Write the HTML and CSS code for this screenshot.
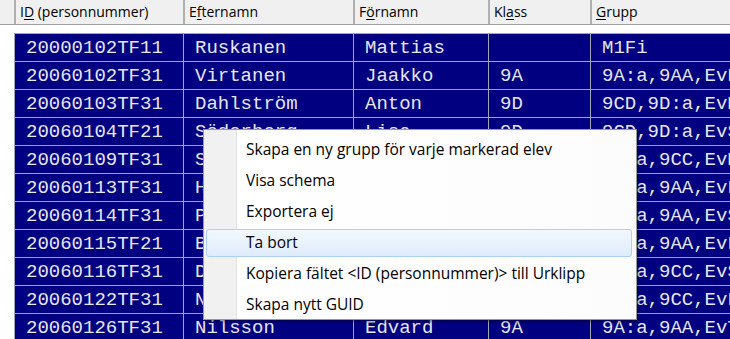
FILE: index.html
```html
<!doctype html>
<html lang="sv">
  <head>
    <meta charset="UTF-8" />
    <title>Elever</title>
    <link rel="stylesheet" href="styles.css">
  </head>
  <body>
    <div class="header">
      <div class="hcell hcell-first"></div>
      <div class="hcell c-id">I<u>D</u> (personnummer)</div>
      <div class="hcell c-last">E<u>f</u>ternamn</div>
      <div class="hcell c-first">F<u>ö</u>rnamn</div>
      <div class="hcell c-class">Kl<u>a</u>ss</div>
      <div class="hcell c-group"><u>G</u>rupp</div>
    </div>

    <table class="students">
      <colgroup>
        <col class="c-id" />
        <col class="c-last" />
        <col class="c-first" />
        <col class="c-class" />
        <col class="c-group" />
      </colgroup>
      <tbody>
        <tr><td>20000102TF11</td><td>Ruskanen</td><td>Mattias</td><td></td><td>M1Fi</td></tr>
        <tr><td>20060102TF31</td><td>Virtanen</td><td>Jaakko</td><td>9A</td><td>9A:a,9AA,EvE,SpT</td></tr>
        <tr><td>20060103TF31</td><td>Dahlström</td><td>Anton</td><td>9D</td><td>9CD,9D:a,EvM,SpF</td></tr>
        <tr><td>20060104TF21</td><td>Söderberg</td><td>Lisa</td><td>9D</td><td>9CD,9D:a,EvS,SpT</td></tr>
        <tr><td>20060109TF31</td><td>Svensson</td><td>Erik</td><td>9C</td><td>9C:a,9CC,EvM,SpF</td></tr>
        <tr><td>20060113TF31</td><td>Holm</td><td>Sara</td><td>9A</td><td>9A:a,9AA,EvF,SpT</td></tr>
        <tr><td>20060114TF31</td><td>Persson</td><td>Johan</td><td>9A</td><td>9A:a,9AA,EvS,SpF</td></tr>
        <tr><td>20060115TF21</td><td>Berg</td><td>Emma</td><td>9A</td><td>9A:a,9AA,EvF,SpT</td></tr>
        <tr><td>20060116TF31</td><td>Danielsson</td><td>Oskar</td><td>9C</td><td>9C:a,9CC,EvS,SpF</td></tr>
        <tr><td>20060122TF31</td><td>Nyberg</td><td>Elin</td><td>9C</td><td>9C:a,9CC,EvF,SpT</td></tr>
        <tr><td>20060126TF31</td><td>Nilsson</td><td>Edvard</td><td>9A</td><td>9A:a,9AA,EvT,SpF</td></tr>
      </tbody>
    </table>

    <ul class="context-menu">
      <li class="menu-item">Skapa en ny grupp för varje markerad elev</li>
      <li class="menu-item">Visa schema</li>
      <li class="menu-item">Exportera ej</li>
      <li class="menu-item active">Ta bort</li>
      <li class="menu-item">Kopiera fältet &lt;ID (personnummer)&gt; till Urklipp</li>
      <li class="menu-item">Skapa nytt GUID</li>
    </ul>
  </body>
</html>
```

FILE: styles.css
```css
body {
  margin: 0;
  background: #ffffff;
  overflow: hidden;
  width: 730px;
  height: 339px;
  position: relative;
}
.header {
  display: flex;
  height: 24px;
  background: #f0f0f0;
  border-bottom: 1px solid #a0a0a0;
  font-family: "Open Sans", "Noto Sans", sans-serif;
  font-size: 14px;
  color: #000000;
  white-space: nowrap;
}
.hcell {
  box-sizing: border-box;
  border-right: 2px solid #b0b0b0;
  padding-left: 4px;
  line-height: 24px;
  flex: none;
  overflow: hidden;
}
.hcell-first {
  width: 16px;
  padding: 0;
}
.hcell.c-id {
  width: 169px;
}
.hcell.c-last {
  width: 170px;
}
.hcell.c-first {
  width: 135px;
}
.hcell.c-class {
  width: 102px;
}
.hcell.c-group {
  width: 200px;
  border-right: none;
}
.hcell u {
  text-decoration-thickness: 1px;
  text-underline-offset: 2px;
}
.students {
  margin: 8px 0 0 14px;
  border-collapse: collapse;
  table-layout: fixed;
  width: 776px;
  font-family: "Liberation Mono", "Courier New", monospace;
  font-size: 19px;
  color: #e6e6f0;
}
col.c-id {
  width: 169px;
}
col.c-last {
  width: 170px;
}
col.c-first {
  width: 135px;
}
col.c-class {
  width: 102px;
}
col.c-group {
  width: 200px;
}
.students td {
  background: #000080;
  border: 1px solid #a4a4b8;
  height: 25px;
  padding: 2px 0 0 11px;
  white-space: nowrap;
  overflow: hidden;
  line-height: 25px;
}
.context-menu {
  position: absolute;
  left: 203px;
  top: 129px;
  width: 434px;
  height: 191px;
  margin: 0;
  padding: 3px 0 0;
  box-sizing: border-box;
  list-style: none;
  border: 1px solid #979797;
  background: linear-gradient(to right, #f1f1f1 0, #f1f1f1 32px, #e2e3e3 32px, #e2e3e3 33px, #ffffff 33px, #fcfcfc 100%);
  box-shadow: 2px 2px 2px rgba(0, 0, 0, 0.35);
  font-family: "Open Sans", "Noto Sans", sans-serif;
  font-size: 15.5px;
  color: #000000;
}
.menu-item {
  box-sizing: border-box;
  height: 28px;
  margin: 3px 4px 0 2px;
  padding-left: 39px;
  line-height: 25px;
  border: 1px solid transparent;
  border-radius: 3px;
  white-space: nowrap;
}
.menu-item.active {
  border-color: #aecff7;
  background: linear-gradient(to bottom, #f2f8fe, #dfecfb);
}
```
